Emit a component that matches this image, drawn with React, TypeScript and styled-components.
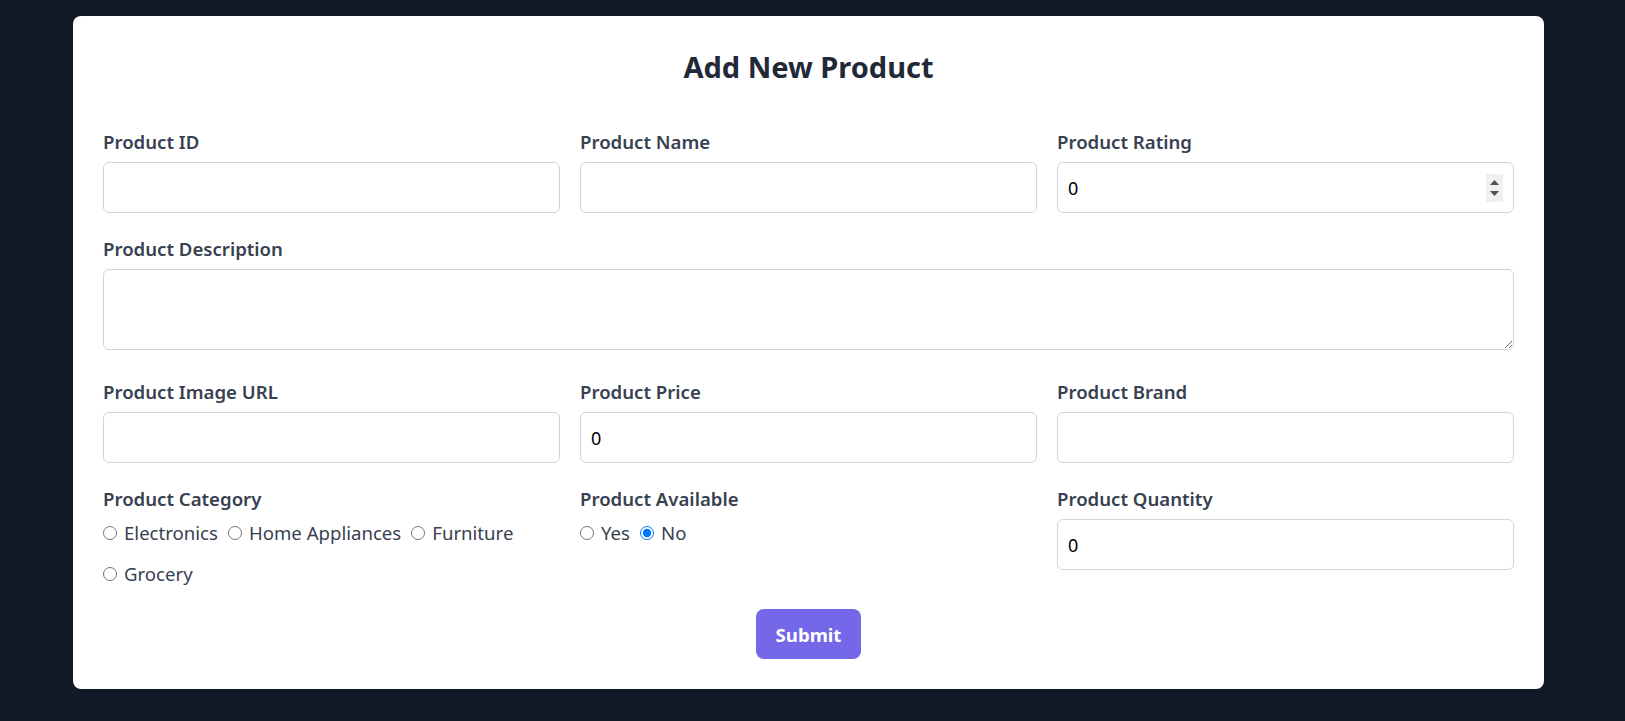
import React from "react";
import styled, { createGlobalStyle } from "styled-components";

const GlobalStyle = createGlobalStyle`
  body {
    margin: 0;
    background-color: #111827;
    font-family: "Noto Sans", "Open Sans", sans-serif;
  }
`;

const Page = styled.div`
  min-height: 100vh;
  box-sizing: border-box;
  padding: 16px 0 32px 73px;
`;

const Card = styled.div`
  width: 1471px;
  box-sizing: border-box;
  padding: 30px;
  background-color: #ffffff;
  border-radius: 8px;
`;

const Title = styled.h2`
  margin: 3px 0 45px;
  text-align: center;
  font-size: 29px;
  line-height: 36px;
  font-weight: 700;
  color: #1f2937;
`;

const FormGrid = styled.div`
  display: grid;
  grid-template-columns: repeat(3, 1fr);
  column-gap: 20px;
  row-gap: 24px;
`;

const Field = styled.div<{ $wide?: boolean }>`
  grid-column: ${(props) => (props.$wide ? "1 / -1" : "auto")};
`;

const Label = styled.label`
  display: block;
  margin-bottom: 8px;
  font-size: 18.6px;
  line-height: 24px;
  font-weight: 600;
  color: #374151;
`;

const TextInput = styled.input`
  display: block;
  width: 100%;
  height: 51px;
  box-sizing: border-box;
  padding: 0 10px;
  border: 1px solid #d1d5db;
  border-radius: 6px;
  background-color: #ffffff;
  font-family: inherit;
  font-size: 18px;
  color: #000000;
  outline: none;
`;

const NumberWrap = styled.div`
  position: relative;
`;

const NumberInput = styled(TextInput)`
  padding-right: 36px;
  -moz-appearance: textfield;

  &::-webkit-inner-spin-button,
  &::-webkit-outer-spin-button {
    -webkit-appearance: none;
    margin: 0;
  }
`;

// the spinner of the rating field, drawn as it shows while hovered
const Spinner = styled.span`
  position: absolute;
  top: 50%;
  right: 11px;
  transform: translateY(-50%);
  display: flex;
  flex-direction: column;
  align-items: center;
  justify-content: space-evenly;
  width: 17px;
  height: 28px;
  background-color: #f0f0f0;
  pointer-events: none;
`;

const TextArea = styled.textarea`
  display: block;
  width: 100%;
  height: 81px;
  box-sizing: border-box;
  margin-bottom: 6px;
  padding: 10px;
  border: 1px solid #d1d5db;
  border-radius: 6px;
  font-family: inherit;
  font-size: 18px;
  outline: none;
`;

const RadioGroup = styled.div`
  display: flex;
  flex-wrap: wrap;
  column-gap: 10px;
  row-gap: 13px;
  margin-top: 3px;
`;

const RadioOption = styled.label`
  display: inline-flex;
  align-items: center;
  font-size: 18.6px;
  line-height: 28px;
  color: #374151;
`;

const Radio = styled.input`
  width: 14px;
  height: 14px;
  margin: 0 7px 0 0;
`;

const SubmitButton = styled.button`
  display: block;
  height: 50px;
  margin: 21px auto 0;
  padding: 0 20px;
  border: none;
  border-radius: 8px;
  background-color: #7468e8;
  font-family: inherit;
  font-size: 18.6px;
  font-weight: 700;
  color: #ffffff;
  cursor: pointer;
`;

const Arrow = ({ up }: { up?: boolean }) => (
  <svg width="9" height="5" viewBox="0 0 9 5">
    <path d={up ? "M0 5 L4.5 0 L9 5 Z" : "M0 0 L4.5 5 L9 0 Z"} fill="#505050" />
  </svg>
);

const categories = ["Electronics", "Home Appliances", "Furniture", "Grocery"];

const App = () => {
  return (
    <>
      <GlobalStyle />
      <Page>
        <Card>
          <Title>Add New Product</Title>
          <form onSubmit={(e) => e.preventDefault()}>
            <FormGrid>
              <Field>
                <Label htmlFor="productId">Product ID</Label>
                <TextInput id="productId" type="text" />
              </Field>
              <Field>
                <Label htmlFor="productName">Product Name</Label>
                <TextInput id="productName" type="text" />
              </Field>
              <Field>
                <Label htmlFor="productRating">Product Rating</Label>
                <NumberWrap>
                  <NumberInput id="productRating" type="number" defaultValue={0} />
                  <Spinner>
                    <Arrow up />
                    <Arrow />
                  </Spinner>
                </NumberWrap>
              </Field>

              <Field $wide>
                <Label htmlFor="productDescription">Product Description</Label>
                <TextArea id="productDescription" />
              </Field>

              <Field>
                <Label htmlFor="productImage">Product Image URL</Label>
                <TextInput id="productImage" type="text" />
              </Field>
              <Field>
                <Label htmlFor="productPrice">Product Price</Label>
                <TextInput id="productPrice" type="text" defaultValue="0" />
              </Field>
              <Field>
                <Label htmlFor="productBrand">Product Brand</Label>
                <TextInput id="productBrand" type="text" />
              </Field>

              <Field>
                <Label as="div">Product Category</Label>
                <RadioGroup>
                  {categories.map((item) => (
                    <RadioOption key={item}>
                      <Radio type="radio" name="category" value={item} />
                      {item}
                    </RadioOption>
                  ))}
                </RadioGroup>
              </Field>
              <Field>
                <Label as="div">Product Available</Label>
                <RadioGroup>
                  <RadioOption>
                    <Radio type="radio" name="available" value="yes" />
                    Yes
                  </RadioOption>
                  <RadioOption>
                    <Radio type="radio" name="available" value="no" defaultChecked />
                    No
                  </RadioOption>
                </RadioGroup>
              </Field>
              <Field>
                <Label htmlFor="productQuantity">Product Quantity</Label>
                <TextInput id="productQuantity" type="text" defaultValue="0" />
              </Field>
            </FormGrid>
            <SubmitButton type="submit">Submit</SubmitButton>
          </form>
        </Card>
      </Page>
    </>
  );
};

export default App;
